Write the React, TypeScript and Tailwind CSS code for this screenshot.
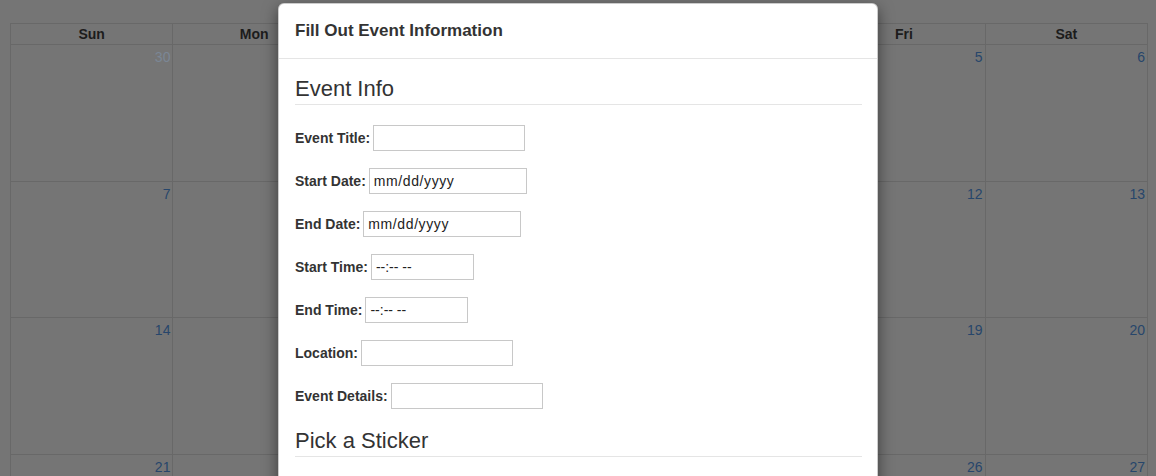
import React from 'react';

type Cell = { day: number; muted?: boolean };

const weekdays = ['Sun', 'Mon', 'Tue', 'Wed', 'Thu', 'Fri', 'Sat'];

const weeks: Cell[][] = [
  [{ day: 30, muted: true }, { day: 1 }, { day: 2 }, { day: 3 }, { day: 4 }, { day: 5 }, { day: 6 }],
  [7, 8, 9, 10, 11, 12, 13].map((d) => ({ day: d })),
  [14, 15, 16, 17, 18, 19, 20].map((d) => ({ day: d })),
  [21, 22, 23, 24, 25, 26, 27].map((d) => ({ day: d })),
];

const fields = [
  { label: 'Event Title:', value: '', width: 'w-[152px]' },
  { label: 'Start Date:', value: 'mm/dd/yyyy', width: 'w-[158px]', date: true },
  { label: 'End Date:', value: 'mm/dd/yyyy', width: 'w-[158px]', date: true },
  { label: 'Start Time:', value: '--:-- --', width: 'w-[103px]' },
  { label: 'End Time:', value: '--:-- --', width: 'w-[103px]' },
  { label: 'Location:', value: '', width: 'w-[152px]' },
  { label: 'Event Details:', value: '', width: 'w-[152px]' },
];

const Calendar = () => (
  <div className="pt-[23px] px-[10px]">
    <div className="w-[1138px] border-l border-t border-[#686868]">
      <div className="grid grid-cols-7">
        {weekdays.map((w) => (
          <div
            key={w}
            className="h-[21px] border-r border-b border-[#686868] text-center text-[14px] font-bold leading-[21px] text-[#1c1c1c]"
          >
            {w}
          </div>
        ))}
      </div>
      {weeks.map((week, i) => (
        <div key={i} className="grid grid-cols-7">
          {week.map((c) => (
            <div
              key={c.day + '-' + i}
              className="h-[136.5px] border-r border-b border-[#686868] px-[2px] pt-[2px] text-right text-[14px] leading-[20px]"
            >
              <span className={c.muted ? 'text-[#7b8795]' : 'text-[#27466b]'}>{c.day}</span>
            </div>
          ))}
        </div>
      ))}
    </div>
  </div>
);

const EventModal = () => (
  <div className="absolute inset-x-0 top-[3px] flex justify-center">
    <div className="w-[600px] rounded-[6px] border border-black/20 bg-white shadow-[0_5px_15px_rgba(0,0,0,0.5)]">
      <div className="border-b border-[#e5e5e5] pl-[16px] pr-[15px] pt-[15px] pb-[15px]">
        <h4 className="text-[17px] leading-[24px] font-bold text-[#333]">
          Fill Out Event Information
        </h4>
      </div>
      <div className="pl-[16px] pr-[15px] pt-[17px] pb-[15px] text-[#333]">
        <h3 className="border-b border-[#e5e5e5] pb-[2px] text-[22px] leading-[26px]">
          Event Info
        </h3>
        <div className="mt-[20px] flex flex-col gap-[17px]">
          {fields.map((f) => (
            <div key={f.label} className="flex h-[26px] items-center gap-[3px]">
              <label className="text-[14px] font-bold">{f.label}</label>
              <input
                type="text"
                readOnly
                value={f.value}
                className={`${f.width} h-[26px] border border-[#c8c8c8] px-[4px] text-[14px] text-[#222] outline-none ${
                  f.date ? 'tracking-[0.6px]' : ''
                }`}
              />
            </div>
          ))}
        </div>
        <h3 className="mt-[19px] border-b border-[#e5e5e5] pb-[2px] text-[22px] leading-[26px]">
          Pick a Sticker
        </h3>
        <div className="h-[120px]" />
      </div>
    </div>
  </div>
);

const App = () => {
  return (
    <div
      className="relative h-[476px] w-full overflow-hidden bg-[#757575]"
      style={{ fontFamily: '"Liberation Sans", Arial, sans-serif' }}
    >
      <Calendar />
      <EventModal />
    </div>
  );
};

export default App;
